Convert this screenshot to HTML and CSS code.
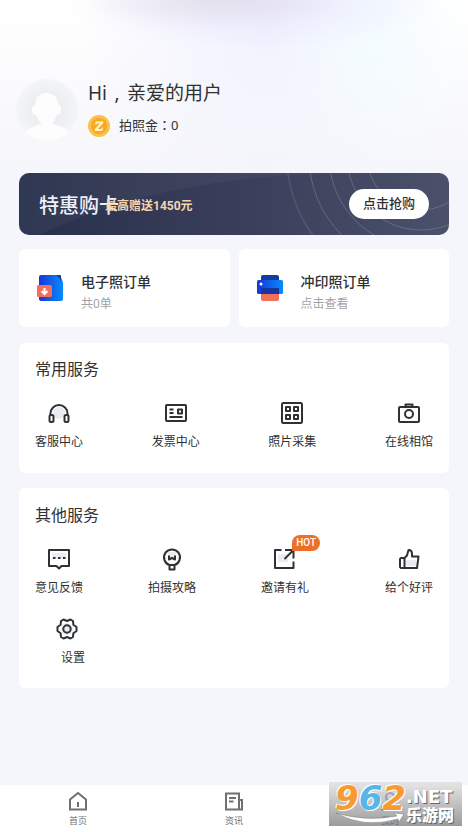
FILE: index.html
```html
<!DOCTYPE html>
<html lang="zh-CN">
<head>
<meta charset="utf-8">
<meta name="viewport" content="width=device-width, initial-scale=1">
<title>我的</title>
<link rel="stylesheet" href="styles.css">
</head>
<body>
<main class="page">
  <header class="profile">
    <svg class="avatar" viewBox="0 0 62 62" aria-hidden="true">
      <defs>
        <radialGradient id="av" cx=".5" cy=".5" r=".5"><stop offset="0" stop-color="#e6e7ec"/><stop offset="1" stop-color="#f4f5f8"/></radialGradient>
        <clipPath id="avClip"><circle cx="31" cy="31" r="31"/></clipPath>
      </defs>
      <circle cx="31" cy="31" r="31" fill="url(#av)"/>
      <g clip-path="url(#avClip)" fill="#fdfdfe">
        <path d="M8 54c4-5 9-6 14-8 4-1 5-2 5-5h8c0 3 1 4 5 5 6 2 11 3 14 8v9H8z"/>
        <ellipse cx="18.500" cy="31" rx="2.500" ry="5"/><ellipse cx="42.500" cy="31" rx="2.500" ry="5"/>
        <path d="M19 27c0-8 4-13 11.500-13S42 19 42 27c0 10-4 19-11.500 19S19 37 19 27z"/>
      </g>
    </svg>
    <div class="profile-text">
      <h1 class="greeting">Hi<span class="comma">,</span>亲爱的用户</h1>
      <div class="balance">
        <svg class="coin" viewBox="0 0 22 22" aria-hidden="true">
          <circle cx="11" cy="11" r="11" fill="#fbc245"/><circle cx="11" cy="11" r="8" fill="#f6a927"/>
          <path d="M7.500 6.500h8l-.5 2-5 5.500h3.500l.8-1.500h1l-1 3.500H6.500l.4-2 5-5.500H9l-.8 1.300h-1z" fill="#fff0c0"/>
        </svg>
        <span>拍照金<span class="colon" lang="zh-TW">：</span>0</span>
      </div>
    </div>
  </header>

  <section class="banner">
    <svg class="banner-art" viewBox="0 0 430 62" preserveAspectRatio="xMaxYMid slice" aria-hidden="true">
      <path d="M20 62Q130 8 300 0H0V62z" fill="#fff" opacity=".04"/>
      <g fill="none" stroke="#8b90ab" stroke-opacity=".45">
        <circle cx="402" cy="-17" r="54"/><circle cx="402" cy="-17" r="74"/><circle cx="402" cy="-17" r="92"/><circle cx="402" cy="-17" r="112"/><circle cx="402" cy="-17" r="134" stroke-opacity=".2" stroke-width="2"/>
      </g>
    </svg>
    <strong class="banner-title">特惠购卡</strong>
    <span class="banner-note">最高赠送1450元</span>
    <button class="banner-button" type="button">点击抢购</button>
  </section>

  <div class="orders">
    <a class="order" href="#digital">
      <svg class="order-icon" viewBox="0 0 28 28" aria-hidden="true">
        <defs><linearGradient id="blue" x1="0" x2="1"><stop offset="0" stop-color="#1637d8"/><stop offset="1" stop-color="#078bff"/></linearGradient></defs>
        <path d="M4 1h15q6 1 7 8v16q0 2-2 2H4q-2 0-2-2V3q0-2 2-2z" fill="url(#blue)"/>
        <path d="M19 1h4q1 0 1 1v5q-2-4-5-6z" fill="#183a9c"/>
        <rect x="0" y="11" width="15" height="12" rx="1.500" fill="#f2705a"/>
        <path d="M7.500 14v5M4.500 17l3 3 3-3" fill="none" stroke="#fff" stroke-width="2"/>
      </svg>
      <span class="order-text"><b>电子照订单</b><small>共0单</small></span>
    </a>
    <a class="order" href="#print">
      <svg class="order-icon" viewBox="0 0 28 28" aria-hidden="true">
        <rect x="4" y="1" width="18" height="9" rx="2" fill="#163d9e"/>
        <rect x="0" y="6" width="26" height="14" rx="1.500" fill="url(#blue)"/>
        <path d="M4 14h18v6H4z" fill="#15369f"/>
        <path d="M4 20h18v5q0 2-2 2H6q-2 0-2-2z" fill="#f2705a"/>
        <circle cx="4" cy="10" r="1.500" fill="#fff"/>
      </svg>
      <span class="order-text"><b>冲印照订单</b><small>点击查看</small></span>
    </a>
  </div>

  <section class="panel">
    <h2>常用服务</h2>
    <div class="services">
      <a class="service" href="#support">
        <svg class="icon" viewBox="0 0 24 24" aria-hidden="true"><circle class="tint" cx="12" cy="12" r="6"/><path d="M3.500 15v-2.500a8.500 8.500 0 0 1 17 0V15"/><rect x="2.500" y="14" width="4" height="7" rx="1.500"/><rect x="17.500" y="14" width="4" height="7" rx="1.500"/></svg>
        <span>客服中心</span>
      </a>
      <a class="service" href="#invoice">
        <svg class="icon" viewBox="0 0 24 24" aria-hidden="true"><rect x="2" y="4" width="20" height="16" rx="1"/><path d="M5.500 8.500h4M5.500 12h4M5.500 16h13"/><rect x="14" y="8.500" width="4" height="4"/></svg>
        <span>发票中心</span>
      </a>
      <a class="service" href="#collect">
        <svg class="icon" viewBox="0 0 24 24" aria-hidden="true"><rect x="2" y="2" width="20" height="20" rx="1.500"/><path d="M6 6h4v4H6zM14 6h4v4h-4zM6 14h4v4H6zM14 14h4v4h-4z"/></svg>
        <span>照片采集</span>
      </a>
      <a class="service" href="#studio">
        <svg class="icon" viewBox="0 0 24 24" aria-hidden="true"><path d="M3 6h18q1 0 1 1v13q0 1-1 1H3q-1 0-1-1V7q0-1 1-1zM8.500 6V3.500h7V6"/><circle cx="12" cy="13" r="4"/></svg>
        <span>在线相馆</span>
      </a>
    </div>
  </section>

  <section class="panel panel-other">
    <h2>其他服务</h2>
    <div class="services">
      <a class="service" href="#feedback">
        <svg class="icon" viewBox="0 0 24 24" aria-hidden="true"><path class="tint" d="M5 6h14v6H5z"/><path d="M2 3h20v16h-7.500L12 21.500 9.500 19H2z"/><path d="M6 11h2.500M11 11h2.500M16 11h2.500"/></svg>
        <span>意见反馈</span>
      </a>
      <a class="service" href="#guide">
        <svg class="icon" viewBox="0 0 24 24" aria-hidden="true"><path class="tint" d="M8 5h8v6H8z"/><path d="M9.500 18a8 8 0 1 1 5 0v4.500h-5zM9 18h6M9 8.500v4l3-1.500 3 1.500v-4"/></svg>
        <span>拍摄攻略</span>
      </a>
      <a class="service invite" href="#invite">
        <svg class="icon" viewBox="0 0 24 24" aria-hidden="true"><path class="tint" d="M6 7h10v8H6z"/><path d="M9.500 3H3v18h18.500v-6.500M13 3h8.500v8.500M21 3.500 12.500 12"/></svg>
        <em class="badge">HOT</em>
        <span>邀请有礼</span>
      </a>
      <a class="service" href="#rate">
        <svg class="icon" viewBox="0 0 24 24" aria-hidden="true"><path class="tint" d="M9 13h10v6H9z"/><path d="M7.500 11 10 8.500 11.500 3q3.500 0 3.500 4v2.500h6.500l-1.500 11.500H7.500zM7.500 11H4L3 12v8l1 1h3.500zV21"/></svg>
        <span>给个好评</span>
      </a>
    </div>
    <a class="service settings" href="#settings">
      <svg class="icon" viewBox="0 0 24 24" aria-hidden="true"><path d="M8.500 2.500 12 4l3.500-1.500L18 4l.4 3.800L21.500 10v4l-3.100 2.200L18 20l-2.500 1.500L12 20l-3.500 1.500L6 20l-.4-3.800L2.500 14v-4l3.100-2.200L6 4z"/><circle class="tint" cx="12" cy="12" r="6"/><circle cx="12" cy="12" r="3.700"/></svg>
      <span>设置</span>
    </a>
  </section>
</main>

<nav class="tabs">
  <a class="tab" href="#home">
    <svg class="tab-icon" viewBox="0 0 20 20" aria-hidden="true"><path d="M2 8.500 10 2l8 6.500V18.500H2zM10 11v5"/></svg>
    <span>首页</span>
  </a>
  <a class="tab" href="#news">
    <svg class="tab-icon" viewBox="0 0 20 20" aria-hidden="true"><path d="M15 18.500H2v-16h13zM15 9h3v9.500h-3M5 7h7M5 10.500h4.500"/></svg>
    <span>资讯</span>
  </a>
  <a class="tab current" href="#me">
    <svg class="tab-icon" viewBox="0 0 20 20" aria-hidden="true"><circle cx="10" cy="6" r="4"/><path d="M2 18.500q0-7 8-7t8 7z"/></svg>
    <span>我的</span>
  </a>
  <div class="watermark">
    <svg class="swoosh" viewBox="0 0 133 44" aria-hidden="true"><path d="M7 31q30 9 61 3l-3-3 10 1-5 8-1-3Q35 47 7 31z" fill="#fff" stroke="#777" stroke-width=".5"/></svg>
    <span class="mark-number">9<i>6</i>2</span>
    <span class="mark-side"><b>.NET</b><strong>乐游网</strong></span>
  </div>
</nav>
</body>
</html>
```

FILE: styles.css
```css
* { box-sizing: border-box; }

body {
  margin: 0;
  min-height: 100vh;
  display: flex;
  flex-direction: column;
  color: #303133;
  font-family: Roboto, "Noto Sans CJK SC", sans-serif;
  background:
    radial-gradient(ellipse 130px 30px at 45% 0, #dcd4da77, transparent),
    radial-gradient(ellipse 190px 50px at 54% 0, #e0defa99, transparent),
    radial-gradient(ellipse 100px 110px at 80% 50px, #f2feffaa, transparent),
    radial-gradient(ellipse 180px 170px at 57% 30px, #eeeffecc, transparent),
    linear-gradient(#fff, #fbfbfd 80px, #f5f6fb 180px);
}

a { color: inherit; text-decoration: none; }

.page {
  flex: 1;
  padding: 79px 19px 0;
}

.profile {
  display: flex;
  gap: 10px;
  margin-left: -3px;
}

.avatar { width: 62px; height: 62px; }

.greeting {
  margin: 0;
  font: 400 19px/28px "Noto Sans", "Noto Sans CJK SC", sans-serif;
}

.comma {
  display: inline-block;
  width: 20px;
  text-align: center;
}

.balance {
  display: flex;
  align-items: center;
  gap: 9px;
  margin-top: 8px;
  font: 13px/20px "Noto Sans", "Noto Sans CJK SC", sans-serif;
}

.coin { width: 22px; height: 22px; }

.balance > span { padding-bottom: 2px; }

.colon { font-family: "Noto Sans CJK TC", sans-serif; }

.banner {
  position: relative;
  display: flex;
  align-items: center;
  height: 62px;
  margin-top: 32px;
  padding: 0 20px;
  overflow: hidden;
  border-radius: 10px;
  background: linear-gradient(90deg, #27304b, #3c3f5b 55%, #4b516a);
}

.banner-art {
  position: absolute;
  inset: 0;
  width: 100%;
  height: 100%;
}

.banner-title {
  position: relative;
  color: #eef0fa;
  font-size: 20px;
  font-weight: 500;
}

.banner-note {
  position: relative;
  margin-left: -14px;
  color: #f5d5ae;
  font-size: 12px;
  font-weight: 700;
}

.banner-button {
  position: relative;
  width: 80px;
  height: 30px;
  margin-left: auto;
  padding: 0;
  border: 0;
  border-radius: 15px;
  background: #fff;
  color: #303133;
  font: 500 13px/30px Roboto, "Noto Sans CJK SC", sans-serif;
}

.orders {
  display: grid;
  grid-template-columns: 1fr 1fr;
  gap: 9px;
  margin-top: 14px;
}

.order {
  display: flex;
  align-items: center;
  gap: 16px;
  height: 78px;
  padding: 0 18px;
  border-radius: 6px;
  background: #fff;
}

.order-icon { width: 28px; height: 28px; }

.order-text {
  display: grid;
  gap: 2px;
  margin-top: 10px;
}

.order b { font-size: 14px; font-weight: 500; line-height: 20px; }
.order small { color: #a3a3a3; font-size: 12px; line-height: 20px; }

.panel {
  margin-top: 16px;
  padding: 16px 16px 22px;
  border-radius: 6px;
  background: #fff;
}

.panel-other {
  margin-top: 15px;
  padding: 17px 16px 21px;
}

.panel h2 {
  margin: 0 0 20px;
  font-size: 16px;
  font-weight: 400;
  line-height: 22px;
}

.services {
  display: flex;
  justify-content: space-between;
}

.service {
  position: relative;
  display: flex;
  flex-direction: column;
  align-items: center;
  gap: 8px;
  font-size: 12px;
  line-height: 18px;
}

.icon {
  width: 24px;
  height: 24px;
  fill: none;
  stroke: #303133;
  stroke-width: 2;
  stroke-linejoin: round;
}

.icon .tint { fill: #e9edf1; stroke: none; }

.invite { align-items: flex-start; width: 59px; }
.invite .icon { margin-left: 11px; }

.badge {
  position: absolute;
  top: -12px;
  right: 0;
  padding: 0 4px;
  border-radius: 8px 8px 8px 0;
  background: #ed7028;
  color: #fff;
  font-size: 10px;
  font-style: normal;
  font-weight: 500;
  line-height: 16px;
}

.settings {
  align-items: flex-start;
  gap: 8px;
  width: 50px;
  margin: 20px 0 0 20px;
}

.settings span { padding-left: 6px; }

.tabs {
  position: relative;
  display: grid;
  grid-template-columns: repeat(3, 1fr);
  height: 47px;
  background: #fff;
}

.tab {
  display: flex;
  flex-direction: column;
  align-items: center;
  gap: 2px;
  padding-top: 6px;
  color: #707070;
  font-size: 9px;
  line-height: 16px;
}

.tab.current { color: #3350a0; }

.tab-icon {
  width: 20px;
  height: 20px;
  fill: none;
  stroke: currentColor;
  stroke-width: 2;
}

.watermark {
  position: absolute;
  right: 6px;
  bottom: 6px;
  display: flex;
  width: 133px;
  height: 44px;
  padding-left: 6px;
  background: linear-gradient(#dededebb, #777777bb);
  font-family: "DejaVu Sans", "Noto Sans CJK SC", sans-serif;
}

.swoosh { position: absolute; inset: 0; }

.mark-number {
  position: relative;
  color: #f79a31;
  font-size: 34px;
  font-style: italic;
  font-weight: 700;
  line-height: 32px;
  text-shadow: 1px 1px #fff, -1px -1px #fff;
}

.mark-number i { color: #58b5e8; }

.mark-side {
  position: relative;
  display: grid;
  align-content: start;
  padding-top: 6px;
  color: #fff;
  font-weight: 700;
  text-shadow: 1px 1px #666;
}

.mark-side b { font-size: 18px; line-height: 18px; }
.mark-side strong { font-size: 16px; line-height: 19px; }
```
